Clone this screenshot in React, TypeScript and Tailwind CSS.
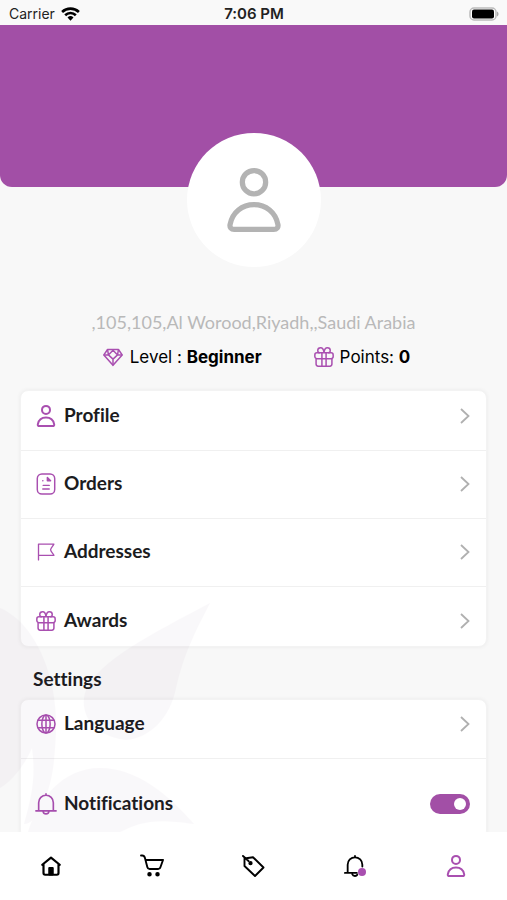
import { useState } from 'react';
import type { ReactNode } from 'react';

type IconProps = { className?: string; strokeWidth?: number };

function UserIcon({ className, strokeWidth = 1.8 }: IconProps) {
  return (
    <svg viewBox="0 0 24 24" className={className} fill="none" stroke="currentColor" strokeWidth={strokeWidth} strokeLinejoin="round">
      <circle cx="12" cy="5.900" r="4" />
      <path d="M3.800 20.400c.8-4.200 4.100-6.800 8.200-6.800s7.400 2.600 8.200 6.800c.2 1-.4 1.700-1.400 1.700H5.200c-1 0-1.600-.7-1.400-1.700z" />
    </svg>
  );
}

function OrdersIcon({ className }: IconProps) {
  return (
    <svg viewBox="0 0 24 24" className={className} fill="none" stroke="currentColor" strokeWidth="1.6" strokeLinecap="round" strokeLinejoin="round">
      <rect x="2.500" y="1" width="19" height="22" rx="5" />
      <path d="M13.500 5v3.500H17M13.500 5 17 8.500M8.500 8.500h.1M9 13.500h6.500M8.500 17.500h7" />
    </svg>
  );
}

function FlagIcon({ className }: IconProps) {
  return (
    <svg viewBox="0 0 24 24" className={className} fill="none" stroke="currentColor" strokeWidth="1.6" strokeLinecap="round" strokeLinejoin="round">
      <path d="M3 21.500V2.500h18.500c-1 2.500-4 4.500-4 6.800s3 4.200 4 6.700H3" />
    </svg>
  );
}

function GiftIcon({ className }: IconProps) {
  return (
    <svg viewBox="0 0 24 24" className={className} fill="none" stroke="currentColor" strokeWidth="1.800" strokeLinejoin="round">
      <rect x="1" y="7" width="22" height="7" rx="2.500" />
      <path d="M2.500 14v6.500a2.500 2.500 0 0 0 2.500 2.500h14a2.500 2.500 0 0 0 2.500-2.500V14M9.500 7v16M14.500 7v16" />
      <path d="M12 6.500C11.500 3 10 1 8 1S4.500 2.500 4.500 4.200 5.500 7 7 7M12 6.500C12.500 3 14 1 16 1s3.500 1.500 3.500 3.200S18.500 7 17 7" />
    </svg>
  );
}

function DiamondIcon({ className }: IconProps) {
  return (
    <svg viewBox="0 0 24 24" className={className} fill="none" stroke="currentColor" strokeWidth="1.800" strokeLinejoin="round">
      <path d="M5.500 3h13L23 9.500 12 22 1 9.500z" />
      <path d="M1 9.500h5.500l5.500 5 5.500-5H23M5.500 3l1 6.500L12 4l5.500 5.500 1-6.500M12 14.500V22" />
    </svg>
  );
}

function GlobeIcon({ className }: IconProps) {
  return (
    <svg viewBox="0 0 24 24" className={className} fill="none" stroke="currentColor" strokeWidth="1.800">
      <circle cx="12" cy="12" r="10.800" />
      <ellipse cx="12" cy="12" rx="5" ry="10.800" />
      <path d="M12 1.500v21M2.500 7.500h19M2.500 16.500h19" />
    </svg>
  );
}

function BellIcon({ className, strokeWidth = 1.8 }: IconProps) {
  return (
    <svg viewBox="0 0 24 24" className={className} fill="none" stroke="currentColor" strokeWidth={strokeWidth} strokeLinecap="round" strokeLinejoin="round">
      <path d="M12 1v1.500M4 19v-8.500a8 8 0 0 1 16 0V19M1 19.500h22M8.800 20c.3 1.800 1.500 2.800 3.200 2.800s2.900-1 3.200-2.800" />
    </svg>
  );
}

function BellAlertIcon({ className }: IconProps) {
  return (
    <svg viewBox="0 0 24 24" className={className} fill="none" stroke="currentColor" strokeWidth="2" strokeLinecap="round" strokeLinejoin="round">
      <path d="M12 1v1.500M4 19v-8.500a8 8 0 0 1 16 0v2M1 19.500h13M9 21c.5 1.300 1.500 1.900 3 1.900s2-.4 2.500-1.300" />
    </svg>
  );
}

function HomeIcon({ className }: IconProps) {
  return (
    <svg viewBox="0 0 24 24" className={className} fill="none" stroke="currentColor" strokeWidth="2.600" strokeLinecap="round" strokeLinejoin="round">
      <path d="M1.500 10.500 12 2l10.500 8.500M3 10v10.500a2 2 0 0 0 2 2h14a2 2 0 0 0 2-2V10" />
      <path d="M10 14.500h4V22h-4z" fill="currentColor" />
    </svg>
  );
}

function CartIcon({ className }: IconProps) {
  return (
    <svg viewBox="0 0 24 24" className={className} fill="none" stroke="currentColor" strokeWidth="1.900" strokeLinecap="round" strokeLinejoin="round">
      <path d="M1 1.500h1.300c1.500 0 2.200.8 2.600 2.200l2.400 9.300c.3 1.300 1 2 2.300 2h8.600c1.300 0 2-.7 2.300-2L23 6H5.600" />
      <circle cx="9.500" cy="20.200" r="1.300" fill="currentColor" />
      <circle cx="17.500" cy="20.200" r="1.300" fill="currentColor" />
    </svg>
  );
}

function TagIcon({ className }: IconProps) {
  return (
    <svg viewBox="0 0 24 24" className={className} fill="none" stroke="currentColor" strokeWidth="1.900" strokeLinecap="round" strokeLinejoin="round">
      <path d="M3.500 4.500 12 3.200 22.500 13.500 14 22 3.500 12zM2 2 7.500 7" />
      <circle cx="9.500" cy="9.200" r="1.200" fill="currentColor" />
    </svg>
  );
}

function ChevronIcon() {
  return (
    <svg viewBox="0 0 10 16" className="h-4 w-[10px] text-[#b0b0b0]" fill="none" stroke="currentColor" strokeWidth="1.800">
      <path d="m1 1 7.500 7L1 15" />
    </svg>
  );
}

// faint watermark, tints both the page and the cards
function Leaves() {
  return (
    <svg viewBox="0 0 215 230" className="pointer-events-none absolute bottom-0 left-0 h-[230px] w-[215px] text-[#5b2a70] opacity-[0.028]" fill="currentColor">
      <path d="M0 6c24 10 44 40 52 78 6 30 4 50 2 74-2 22-8 38-14 50-4 8-10 14-16 14 8-28 12-48 8-76C26 160 14 178 0 186z" />
      <path d="M210 1C150 33 100 58 86 88c-8 22 6 46 40 50 24-2 44-22 50-52 8-34 18-54 34-85z" />
      <path d="M28 230c10-32 34-64 72-64 36 0 68 26 94 56-40-6-54-2-74 8z" />
    </svg>
  );
}

function StatusBar() {
  return (
    <div className="grid h-[25px] shrink-0 grid-cols-3 items-center bg-[#f9f9f9] pt-0.5 pr-2 pl-[9px] font-['Inter',sans-serif] text-[14px] leading-5 text-[#222]">
      <div className="flex items-center gap-[6px]">
        <span>Carrier</span>
        <svg viewBox="0 0 20 15" className="h-[14px] w-[19px]" fill="none" stroke="#000" strokeWidth="2.800">
          <path d="M1 5.300a13 13 0 0 1 18 0M4.300 8.800a8.200 8.200 0 0 1 11.400 0" />
          <path d="M6.800 11.300a4.600 4.600 0 0 1 6.400 0L10 14.600z" fill="#000" stroke="none" />
        </svg>
      </div>
      <span className="text-center text-[15px] font-semibold">7:06 PM</span>
      <svg viewBox="0 0 30 14" className="h-[14px] w-[30px] justify-self-end">
        <rect x="1" y="1" width="26" height="12" rx="4" fill="#fff" stroke="#bbb" strokeWidth="1.500" />
        <rect x="3" y="2.500" width="22" height="9" rx="2" fill="#000" />
        <path d="M28 4.500c2 .8 2 4.200 0 5z" fill="#aaa" />
      </svg>
    </div>
  );
}

function RowIcon({ children }: { children: ReactNode }) {
  return <span className="mr-[7px] flex size-[22px] items-center justify-center text-[#a94fb0]">{children}</span>;
}

function MenuLink({ icon, label, className }: { icon: ReactNode; label: string; className: string }) {
  return (
    <a href="#" className={`flex items-center pr-4 pl-[14px] ${className}`}>
      <RowIcon>{icon}</RowIcon>
      <span className="flex-1 pb-0.5">{label}</span>
      <ChevronIcon />
    </a>
  );
}

export default function App() {
  const [notifications, setNotifications] = useState(true);

  return (
    <div className="flex h-screen flex-col bg-[#f8f8f8] font-['Lato',sans-serif] text-[#1c1c1e] [font-variant-ligatures:none]">
      <StatusBar />

      <div className="relative flex min-h-0 flex-1 flex-col">
        <main className="flex-1 overflow-y-auto [scrollbar-width:none]">
          {/* Header with avatar */}
          <div className="flex h-[162px] justify-center rounded-b-[12px] bg-[#a24fa6] pt-[108px]">
            <div className="flex size-[134px] shrink-0 items-center justify-center rounded-full bg-white">
              <UserIcon className="size-[70px] text-[#b3b3b3]" />
            </div>
          </div>

          <p className="mt-[123px] text-center text-[18px] leading-6 text-[#b9b9b9]">,105,105,Al Worood,Riyadh,,Saudi Arabia</p>
          <div className="mt-[11px] flex justify-center gap-[52px] pl-[6px] font-['Inter',sans-serif] text-[17px] leading-6 text-black">
            <div className="flex items-center gap-[7px]">
              <DiamondIcon className="size-5 text-[#a94fb0]" />
              <span>Level : <b className="font-bold">Beginner</b></span>
            </div>
            <div className="flex items-center gap-[6px]">
              <GiftIcon className="size-5 text-[#a94fb0]" />
              <span>Points: <b className="font-bold">0</b></span>
            </div>
          </div>

          {/* Account */}
          <nav className="mx-5 mt-[21px] divide-y divide-[#f0f0f0] rounded-lg border border-[#f3f3f3] bg-white text-[19px] leading-5 font-bold shadow-[0_0_4px_rgba(0,0,0,0.06)]">
            <MenuLink icon={<UserIcon className="size-6 shrink-0" strokeWidth={2} />} label="Profile" className="pt-[14px] pb-[23px]" />
            <MenuLink icon={<OrdersIcon className="size-[22px]" />} label="Orders" className="pt-[22px] pb-[23px]" />
            <MenuLink icon={<FlagIcon className="size-5" />} label="Addresses" className="pt-[22px] pb-[23px]" />
            <MenuLink icon={<GiftIcon className="size-5" />} label="Awards" className="pt-[23px] pb-[14px]" />
          </nav>

          {/* Settings */}
          <h2 className="mx-[33px] mt-5 text-[19px] leading-6 font-bold">Settings</h2>
          <div className="mx-5 mt-2 divide-y divide-[#f0f0f0] rounded-lg border border-[#f3f3f3] bg-white text-[19px] leading-5 font-bold shadow-[0_0_4px_rgba(0,0,0,0.06)]">
            <MenuLink icon={<GlobeIcon className="size-5" />} label="Language" className="pt-[13px] pb-[23px]" />
            <label className="flex items-center pr-4 pl-[14px] pt-[34px] pb-[23px]">
              <RowIcon><BellIcon className="size-[22px]" /></RowIcon>
              <span className="flex-1 pb-0.5">Notifications</span>
              <input
                type="checkbox"
                role="switch"
                checked={notifications}
                onChange={(e) => setNotifications(e.target.checked)}
                className="flex h-5 w-10 appearance-none items-center rounded-full bg-[#c8c8c8] px-1 before:size-3 before:rounded-full before:bg-white checked:justify-end checked:bg-[#a24fa6]"
              />
            </label>
          </div>
        </main>
        <Leaves />
      </div>

      {/* Tab bar */}
      <nav className="grid h-[68px] shrink-0 grid-cols-5 place-items-center bg-white text-black">
        <a href="#" aria-label="Home"><HomeIcon className="size-5" /></a>
        <a href="#" aria-label="Cart"><CartIcon className="size-6" /></a>
        <a href="#" aria-label="Offers"><TagIcon className="size-6" /></a>
        <a href="#" aria-label="Notifications" className="relative">
          <BellAlertIcon className="size-[22px]" />
          <span className="absolute right-0 bottom-[1px] size-2 rounded-full bg-[#a94fb0]" />
        </a>
        <a href="#" aria-label="Account" className="text-[#a94fb0]"><UserIcon className="size-6" strokeWidth={2} /></a>
      </nav>
    </div>
  );
}
